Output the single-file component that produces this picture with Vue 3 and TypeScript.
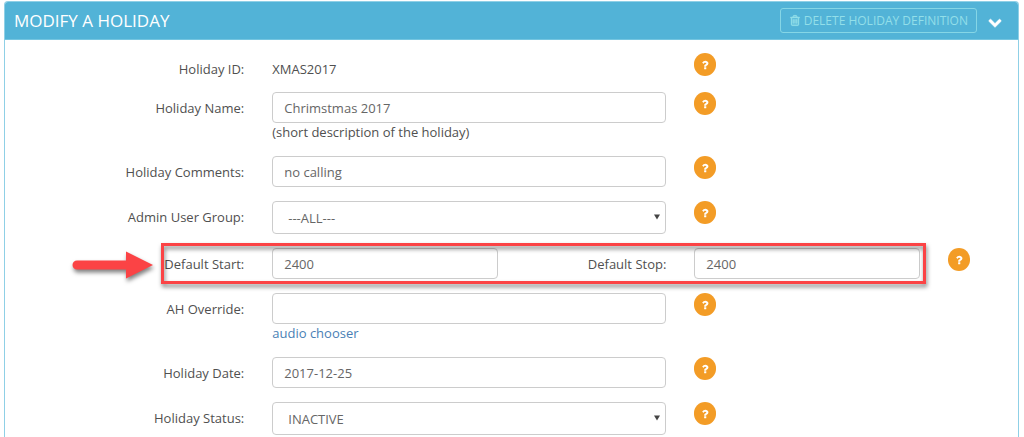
<script setup lang="ts">
import { reactive } from 'vue'

interface Field {
  id: string
  label: string
  kind: 'static' | 'text' | 'select' | 'range'
  hint?: string
  link?: string
}

const fields: Field[] = [
  { id: 'holiday_id', label: 'Holiday ID:', kind: 'static' },
  { id: 'holiday_name', label: 'Holiday Name:', kind: 'text', hint: '(short description of the holiday)' },
  { id: 'holiday_comments', label: 'Holiday Comments:', kind: 'text' },
  { id: 'user_group', label: 'Admin User Group:', kind: 'select' },
  { id: 'default_start', label: 'Default Start:', kind: 'range' },
  { id: 'ah_override', label: 'AH Override:', kind: 'text', link: 'audio chooser' },
  { id: 'holiday_date', label: 'Holiday Date:', kind: 'text' },
  { id: 'holiday_status', label: 'Holiday Status:', kind: 'select' },
]

const values = reactive<Record<string, string>>({
  holiday_id: 'XMAS2017',
  holiday_name: 'Chrimstmas 2017',
  holiday_comments: 'no calling',
  user_group: '---ALL---',
  default_start: '2400',
  default_stop: '2400',
  ah_override: '',
  holiday_date: '2017-12-25',
  holiday_status: 'INACTIVE',
})
</script>

<template>
  <section class="panel">
    <header class="panel-head">
      <h1>MODIFY A HOLIDAY</h1>
      <button type="button" class="delete">
        <svg class="trash" viewBox="0 0 1792 1792" aria-hidden="true">
          <path d="M704 736v576q0 14-9 23t-23 9h-64q-14 0-23-9t-9-23v-576q0-14 9-23t23-9h64q14 0 23 9t9 23zm256 0v576q0 14-9 23t-23 9h-64q-14 0-23-9t-9-23v-576q0-14 9-23t23-9h64q14 0 23 9t9 23zm256 0v576q0 14-9 23t-23 9h-64q-14 0-23-9t-9-23v-576q0-14 9-23t23-9h64q14 0 23 9t9 23zm128 724v-948h-896v948q0 22 7 40.5t14.5 27 10.5 8.5h832q3 0 10.5-8.5t14.5-27 7-40.5zm-672-1076h448l-48-117q-7-9-17-11h-317q-10 2-17 11zm928 32v64q0 14-9 23t-23 9h-96v948q0 83-47 143.5t-113 60.5h-832q-66 0-113-58.5t-47-141.5v-952h-96q-14 0-23-9t-9-23v-64q0-14 9-23t23-9h309l70-167q15-37 54-63t79-26h320q40 0 79 26t54 63l70 167h309q14 0 23 9t9 23z" />
        </svg>
        <span>DELETE HOLIDAY DEFINITION</span>
      </button>
      <button type="button" class="collapse" aria-label="Collapse">
        <svg viewBox="0 0 1792 1792" aria-hidden="true">
          <path d="M1683 808l-742 741q-19 19-45 19t-45-19l-742-741q-19-19-19-45.5t19-45.5l166-165q19-19 45-19t45 19l531 531 531-531q19-19 45-19t45 19l166 165q19 19 19 45.5t-19 45.5z" />
        </svg>
      </button>
    </header>

    <form class="fields" @submit.prevent>
      <div v-for="f in fields" :key="f.id" class="row" :class="f.kind">
        <span v-if="f.kind === 'static'" class="label">{{ f.label }}</span>
        <label v-else class="label" :for="f.id">{{ f.label }}</label>

        <template v-if="f.kind === 'range'">
          <div class="control narrow">
            <input :id="f.id" v-model="values[f.id]" type="text" />
          </div>
          <label class="label second" for="default_stop">Default Stop:</label>
          <div class="control narrow">
            <input id="default_stop" v-model="values.default_stop" type="text" />
          </div>
        </template>

        <div v-else class="control">
          <span v-if="f.kind === 'static'" class="value">{{ values[f.id] }}</span>
          <input v-else-if="f.kind === 'text'" :id="f.id" v-model="values[f.id]" type="text" />
          <div v-else class="select-wrap">
            <select :id="f.id" v-model="values[f.id]">
              <option>{{ values[f.id] }}</option>
            </select>
            <svg class="caret" viewBox="0 0 7 6" aria-hidden="true"><path d="M0 0h7L3.5 6z" /></svg>
          </div>
          <span v-if="f.hint" class="hint">{{ f.hint }}</span>
          <a v-if="f.link" class="hint" href="#">{{ f.link }}</a>
        </div>

        <div class="help-cell">
          <button type="button" class="help" aria-label="Help">
            <svg viewBox="0 0 1792 1792" aria-hidden="true">
              <path d="M1088 1256v240q0 16-12 28t-28 12h-240q-16 0-28-12t-12-28v-240q0-16 12-28t28-12h240q16 0 28 12t12 28zm316-600q0 54-15.5 101t-35 76.5-55 59.5-57.5 43.5-61 35.5q-41 23-68.5 65t-27.5 67q0 17-12 32.5t-28 15.5h-240q-15 0-25.5-18.5t-10.5-37.5v-45q0-83 65-156.5t143-108.5q59-27 84-56t25-76q0-42-46.5-74t-107.5-32q-65 0-108 29-35 25-107 115-13 16-31 16-12 0-25-8l-164-125q-13-10-15.5-25t5.5-28q160-266 464-266 80 0 161 31t146 83 106 127.5 41 158.5z" />
            </svg>
          </button>
        </div>

        <template v-if="f.kind === 'range'">
          <div class="callout"></div>
          <svg class="arrow" viewBox="0 0 82 28" aria-hidden="true">
            <path d="M5 9.5h49V0.500L81 14 54 27.500V18.500H5a4.500 4.500 0 0 1 0-9z" />
          </svg>
        </template>
      </div>
    </form>
  </section>
</template>

<style>
body {
  margin: 0;
  background: #fff;
}
</style>

<style scoped>
* {
  box-sizing: border-box;
}
.panel {
  margin: 1px 5px 0 4px;
  border: 1px solid #8fd0e6;
  border-bottom: 0;
  border-radius: 4px 4px 0 0;
  font-family: "Open Sans", "Noto Sans", sans-serif;
  font-size: 13px;
  line-height: 18px;
  color: #505050;
}
.panel-head {
  display: flex;
  align-items: center;
  height: 38px;
  padding: 0 16px 0 9px;
  border-bottom: 1px solid #74c5e0;
  border-radius: 3px 3px 0 0;
  background: #52b3d7;
  color: #fff;
}
h1 {
  flex: 1;
  margin: 0;
  font-size: 17px;
  line-height: 20px;
  font-weight: 400;
}
button {
  font-family: inherit;
  cursor: pointer;
}
.delete {
  display: flex;
  align-items: center;
  gap: 3px;
  height: 25px;
  padding: 0 8px;
  border: 1px solid #85d6e6;
  border-radius: 3px;
  background: transparent;
  color: #92dfe9;
  font-size: 12px;
  line-height: 18px;
}
.trash {
  width: 12px;
  height: 13px;
  fill: currentColor;
  stroke: currentColor;
  stroke-width: 70;
}
.collapse {
  display: flex;
  margin-left: 11px;
  padding: 3px 0 0;
  border: 0;
  background: transparent;
}
.collapse svg {
  width: 14px;
  height: 14px;
  fill: #fff;
  stroke: #fff;
  stroke-width: 60;
}
.fields {
  display: flex;
  flex-direction: column;
  gap: 14px;
  padding: 13px 0 2px;
}
.row {
  position: relative;
  display: grid;
  grid-template-columns: repeat(12, minmax(0, 1fr));
  align-items: start;
}
.label {
  grid-column: span 3;
  padding: 7px 14px 0 0;
  text-align: right;
}
.second {
  grid-column: span 2;
}
.control {
  grid-column: span 5;
  padding: 0 14px;
}
.narrow {
  grid-column: span 3;
}
.value {
  display: block;
  padding-top: 7px;
}
.hint {
  display: block;
  line-height: 19px;
}
a.hint {
  width: fit-content;
  color: #4a7fb5;
  text-decoration: none;
}
input,
select {
  display: block;
  width: 100%;
  height: 31px;
  margin: 0;
  padding: 0 11px;
  border: 1px solid #ccc;
  border-radius: 4px;
  background: #fff;
  color: #666;
  font: inherit;
  outline: 0;
}
.select-wrap {
  position: relative;
}
select {
  height: 33px;
  padding: 0 24px 0 15px;
  appearance: none;
}
.caret {
  position: absolute;
  top: 13px;
  right: 6px;
  width: 6px;
  height: 6px;
  fill: #444;
  pointer-events: none;
}
.static {
  height: 25px;
}
.help-cell {
  padding-left: 14px;
}
.help {
  display: flex;
  align-items: center;
  justify-content: center;
  width: 22px;
  height: 23px;
  padding: 0;
  border: 0;
  border-radius: 11px;
  background: #f39c26;
}
.help svg {
  width: 12px;
  height: 12px;
  fill: #fff;
}
.callout {
  position: absolute;
  top: -5px;
  bottom: -5px;
  left: calc(25% - 97px);
  right: calc(100% / 12 + 8px);
  border: 3px solid #fb4345;
  filter: drop-shadow(1px 3px 2px rgba(0, 0, 0, 0.5));
  pointer-events: none;
}
.arrow {
  position: absolute;
  top: 3px;
  left: calc(25% - 186px);
  width: 82px;
  height: 28px;
  overflow: visible;
  fill: #fb4345;
  filter: drop-shadow(1px 3px 2px rgba(0, 0, 0, 0.5));
  pointer-events: none;
}
</style>
